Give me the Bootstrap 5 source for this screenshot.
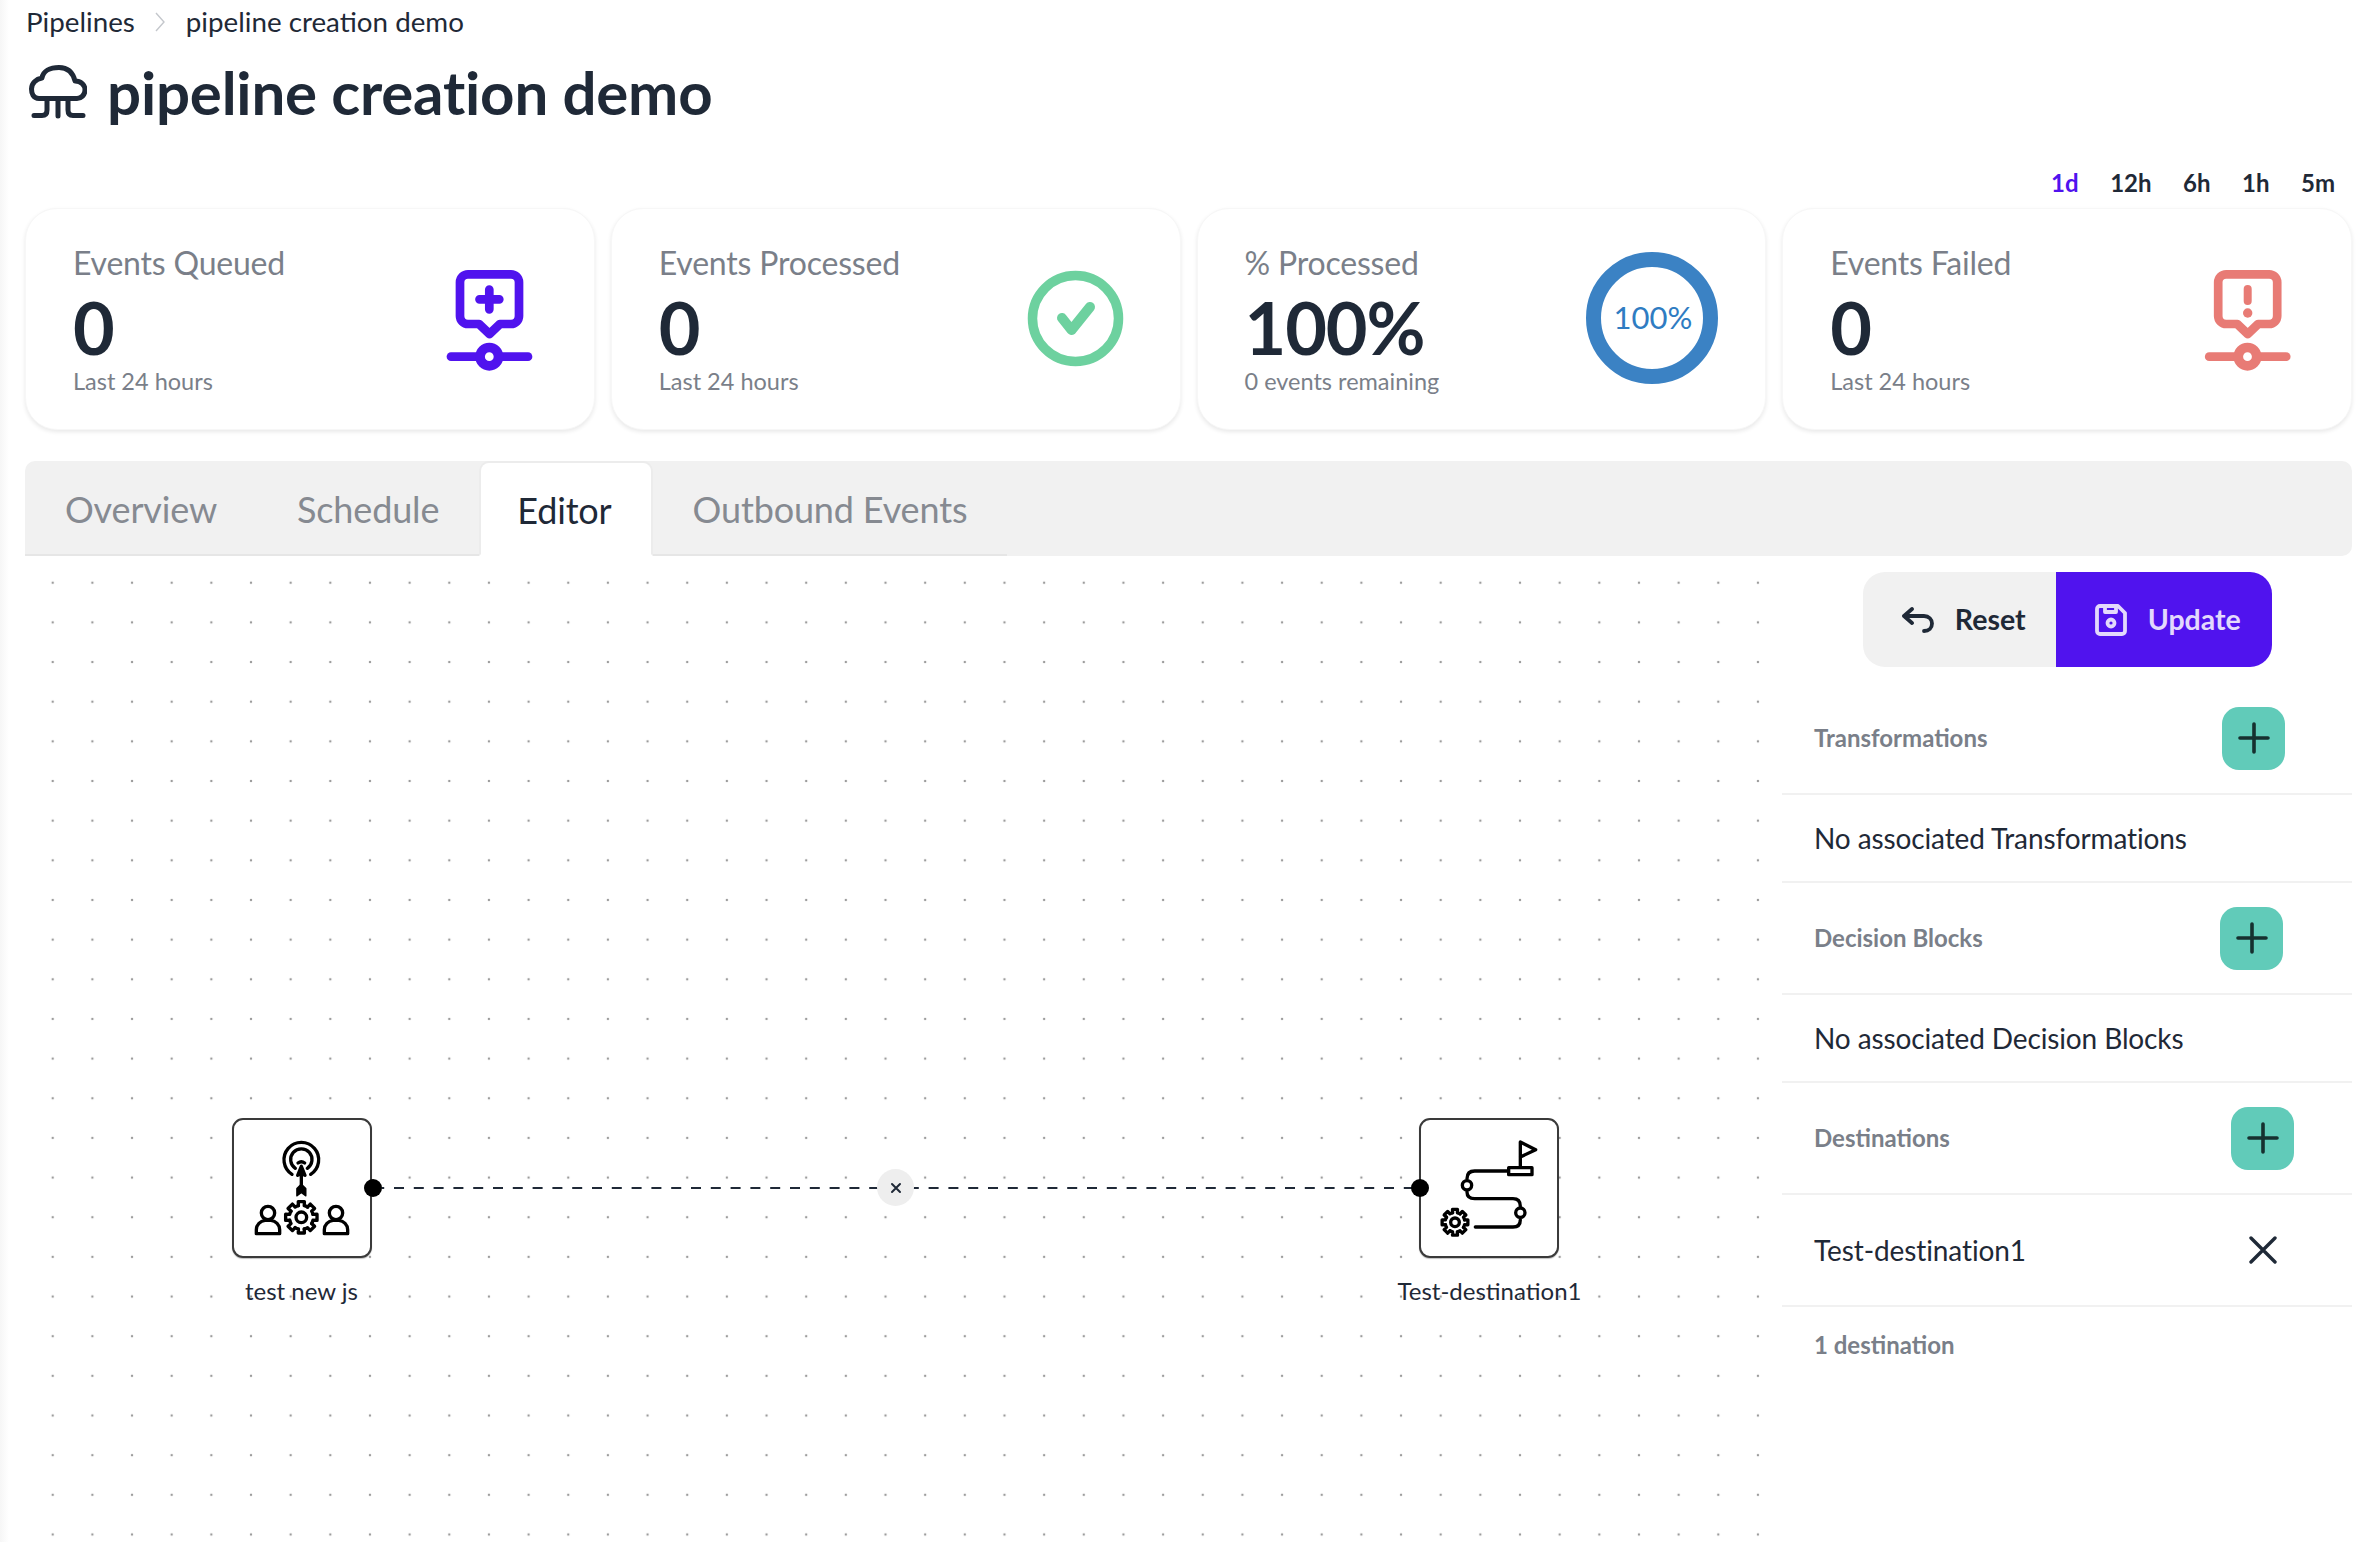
<!DOCTYPE html>
<html lang="en">
<head>
<meta charset="utf-8">
<title>pipeline creation demo</title>
<link href="https://cdn.jsdelivr.net/npm/bootstrap@5.3.0/dist/css/bootstrap.min.css" rel="stylesheet">
<style>
html,body{height:100%}
body{font-family:"Lato","Liberation Sans",sans-serif;color:#1f2937;background:linear-gradient(90deg,#f6f6f6,#fff 9px);overflow:hidden}
.page-shell{padding:0 20px 0 25px;height:1542px;display:flex;flex-direction:column}
.crumbs{height:44px;font-size:27.75px;gap:20.5px;padding-left:1px}
.crumbs a{color:#1f2937;text-decoration:none}
.title-row{height:102px;gap:20px;padding-left:2px;padding-bottom:6px}
.title-row h1{font-size:60px;font-weight:700;letter-spacing:-.2px;margin:0;line-height:1}
.range-row{height:62px;justify-content:flex-end;gap:31.5px;font-size:24px;font-weight:700;padding-right:17px;padding-top:12px}
.range-active{color:#5013ee}
.stat-row{gap:16px}
.stat-card{flex:1 1 0;height:222px;border-radius:32px;border:1px solid #f7f7f7;box-shadow:0 2px 4px rgba(0,0,0,.09);flex-direction:row;justify-content:space-between;padding:32px 35px 0 47px}
.stat-name{font-size:32px;letter-spacing:-.2px;line-height:44px;color:#7a7f89}
.stat-val{font-size:72px;font-weight:700;line-height:84px;letter-spacing:-.015em}
.stat-sub{font-size:23.5px;line-height:24px;color:#7a7f89}
.stat-ico{margin-top:9px;flex:none}
.tab-strip{margin-top:31px;background:#f1f1f1;border-radius:10px 10px 10px 0;border:0;height:95px;flex-wrap:nowrap}
.tab-strip .nav-link{font-size:36px;letter-spacing:-.15px;color:#868a91;padding:0 40px;height:95px;line-height:96px;border:0;border-bottom:2px solid #e6e6e6;border-radius:0;margin:0;background:transparent}
.tab-strip .nav-link.active{background:#fff;color:#1f2937;border:2px solid #ececec;border-bottom-color:#fff;border-radius:10px 10px 0 0;padding:0 39px 0 36px;margin-left:0;line-height:94px}
.work-row{flex:1;min-height:0}
.flow-canvas{flex:1;position:relative;background-image:radial-gradient(circle,#9c9c9c 1.2px,transparent 1.6px);background-size:39.67px 39.67px;background-position:7.9px 6.9px}
.flow-node{position:absolute;top:562px;width:140px;height:140px;border:2px solid #3a3a3a;border-radius:11px;background:#fff;box-shadow:0 1px 1px rgba(0,0,0,.25)}
.node-a{left:206.5px}
.node-b{left:1394px}
.flow-node svg{display:block;margin:-2px}
.flow-label{position:absolute;top:721px;font-size:24px;line-height:28px;transform:translateX(-50%);white-space:nowrap}
.label-a{left:276.500px}
.label-b{left:1464.500px}
.flow-handle{position:absolute;top:623px;width:18px;height:18px;border-radius:50%;background:#000}
.handle-a{left:339px}
.handle-b{left:1386px}
.flow-edge{position:absolute;left:357px;top:631px;width:1030px;height:2px;overflow:visible}
.flow-x{position:absolute;left:852px;top:613px;width:37px;height:37px;border-radius:50%;background:#eeeeee;display:flex;align-items:center;justify-content:center}
.side-panel{width:570px;flex:none;padding-top:16px}
.action-group{margin-left:81px;width:409px;margin-bottom:16px}
.action-group .btn{height:95px;font-size:28.5px;font-weight:700;display:flex;align-items:center;justify-content:center;border:0;--bs-btn-border-radius:22px;gap:21px;padding-left:18px;padding-right:10px}
.btn-reset{width:193px;background:#f1f1f1;color:#1f2937}
.btn-save{width:216px;background:#5013ee;color:#e3d9fc}
.side-row{border-bottom:2px solid #f1f1f1;padding-left:32px;display:flex;align-items:center;justify-content:space-between}
.row-head{height:112px;font-size:24px;font-weight:700;color:#7a7f89}
.row-item{height:88px;font-size:28px;letter-spacing:-.12px}
.row-tall{height:112px;font-size:28px;letter-spacing:-.1px}
.add-btn{width:63px;height:63px;padding:0;border:0;border-radius:17px;background:#61cbb9;display:flex;align-items:center;justify-content:center}
.add-t{margin-right:67px}
.add-d{margin-right:69px}
.add-e{margin-right:58px}
.del-x{margin-right:75px;display:flex}
.side-foot{padding:20px 0 0 32px;font-size:24px;font-weight:700;color:#7a7f89}
</style>
</head>
<body>
<svg width="0" height="0" class="position-absolute">
<defs>
<g id="gear-shape" fill="none" stroke="#000" stroke-linejoin="round">
<path id="gear-t" d="M34.9-8.7 47.1-9.2V9.2L34.9 8.7A36 36 0 0 1 30.9 18.5"/>
<use href="#gear-t" transform="rotate(45)"/><use href="#gear-t" transform="rotate(90)"/><use href="#gear-t" transform="rotate(135)"/>
<use href="#gear-t" transform="rotate(180)"/><use href="#gear-t" transform="rotate(225)"/><use href="#gear-t" transform="rotate(270)"/><use href="#gear-t" transform="rotate(315)"/>
</g>
<g id="plus-mark"><path d="M0-14V14M-14 0H14" stroke="#16302f" stroke-width="3.6" stroke-linecap="round" fill="none"/></g>
</defs>
</svg>
<div class="page-shell">
  <nav class="crumbs d-flex align-items-center" aria-label="breadcrumb">
    <a href="#">Pipelines</a>
    <svg width="10" height="20" viewBox="0 0 10 20"><path d="M1 1 9 10 1 19" fill="none" stroke="#c4c7cc" stroke-width="1.4"/></svg>
    <a href="#">pipeline creation demo</a>
  </nav>
  <div class="title-row d-flex align-items-center">
    <svg width="60" height="56" viewBox="26 36 60 56" fill="none" stroke="#1f2937" stroke-width="5" stroke-linecap="round" stroke-linejoin="round"><path d="M38 70.5C32 70.5 30.5 65 30.5 61 30.5 55.500 35 51 41 50 42 43 49 39.500 58 39.500 67 39.500 72 45 74 53 80 53 84 57 84 62 84 67 80 70.500 76 70.500Z"/><path d="M57 71V88M46 71V82Q46 87.500 41 87.500H33M67 71V82Q67 87.500 72 87.500H82"/></svg>
    <h1>pipeline creation demo</h1>
  </div>
  <div class="range-row d-flex align-items-center">
    <span class="range-active">1d</span><span>12h</span><span>6h</span><span>1h</span><span>5m</span>
  </div>
  <div class="stat-row d-flex">
    <div class="card stat-card">
      <div><div class="stat-name">Events Queued</div><div class="stat-val">0</div><div class="stat-sub">Last 24 hours</div></div>
      <svg class="stat-ico" width="140" height="130" viewBox="-1 0 140 130" fill="none" stroke="#5013ee" stroke-width="8.700" stroke-linecap="round" stroke-linejoin="round"><path d="M48 24.300H91A8 8 0 0 1 99 32.300V66A8 8 0 0 1 91 74H80L69.500 84 59 74H48A8 8 0 0 1 40 66V32.300A8 8 0 0 1 48 24.300Z"/><path d="M69.300 39.500V59.300M59.500 49.300H79.300"/><path d="M31 106.700H108"/><circle cx="69.300" cy="106.700" r="9.200" fill="#fff" stroke-width="9.600"/></svg>
    </div>
    <div class="card stat-card">
      <div><div class="stat-name">Events Processed</div><div class="stat-val">0</div><div class="stat-sub">Last 24 hours</div></div>
      <svg class="stat-ico" width="140" height="130" viewBox="-1 0 140 130" fill="none" stroke="#6dd19f"><circle cx="69.500" cy="68.500" r="43" stroke-width="9.500"/><path d="M56 68 65.500 80 84 57" stroke-width="10" stroke-linecap="round" stroke-linejoin="round"/></svg>
    </div>
    <div class="card stat-card">
      <div><div class="stat-name">% Processed</div><div class="stat-val">100%</div><div class="stat-sub">0 events remaining</div></div>
      <svg class="stat-ico overflow-visible" width="140" height="130" viewBox="0 0 140 130" fill="none"><circle cx="62" cy="68" r="58.500" stroke="#3b82c4" stroke-width="15"/><text x="63" y="79" text-anchor="middle" fill="#2f7cc2" stroke="none" font-size="31" font-family="Lato,sans-serif">100%</text></svg>
    </div>
    <div class="card stat-card">
      <div><div class="stat-name">Events Failed</div><div class="stat-val">0</div><div class="stat-sub">Last 24 hours</div></div>
      <svg class="stat-ico" width="140" height="130" viewBox="-2.200 0 140 130" fill="none" stroke="#e87b75" stroke-width="8.700" stroke-linecap="round" stroke-linejoin="round"><path d="M48 24.300H91A8 8 0 0 1 99 32.300V66A8 8 0 0 1 91 74H80L69.500 84 59 74H48A8 8 0 0 1 40 66V32.300A8 8 0 0 1 48 24.300Z"/><path d="M69.500 39V51" stroke-width="8"/><circle cx="69.500" cy="63" r="4.700" fill="#e87b75" stroke-width="0"/><path d="M31 106.700H108"/><circle cx="69.300" cy="106.700" r="9.200" fill="#fff" stroke-width="9.600"/></svg>
    </div>
  </div>
  <ul class="nav nav-tabs tab-strip">
    <li class="nav-item"><a class="nav-link" href="#">Overview</a></li>
    <li class="nav-item"><a class="nav-link" href="#">Schedule</a></li>
    <li class="nav-item"><a class="nav-link active" href="#">Editor</a></li>
    <li class="nav-item"><a class="nav-link" href="#">Outbound Events</a></li>
  </ul>
  <div class="work-row d-flex">
    <div class="flow-canvas">
      <svg class="flow-edge" viewBox="0 0 1030 2"><path d="M0 1H1030" stroke="#1f2937" stroke-width="2" stroke-dasharray="10 9.800" stroke-dashoffset="7.800"/></svg>
      <div class="flow-x"><svg width="12" height="12" viewBox="0 0 12 12"><path d="M2 2 10 10M10 2 2 10" stroke="#1f2937" stroke-width="2" stroke-linecap="round"/></svg></div>
      <div class="flow-node node-a">
        <svg width="140" height="140" viewBox="95 83 420 420" fill="none" stroke="#000" stroke-width="10" stroke-linecap="round" stroke-linejoin="round">
          <path d="M275 252A52 52 0 1 1 331 252"/><path d="M285 234A32 32 0 1 1 321 234"/><path d="M293 218A16 16 0 0 1 313 218"/>
          <path d="M303 228 292 255 303 250 314 255Z" fill="#000"/><path d="M303 250V285"/>
          <path d="M303 282 290 295V316L303 306 316 316V295Z" fill="#000" stroke-width="5"/>
          <circle cx="203" cy="368" r="20"/><path d="M168 430H238V418C238 403 226 392 212 390H194C180 392 168 403 168 418Z"/>
          <circle cx="407" cy="368" r="20"/><path d="M372 430H442V418C442 403 430 392 416 390H398C384 392 372 403 372 418Z"/>
          <use href="#gear-shape" transform="translate(303 381)" stroke-width="10"/><circle cx="303" cy="381" r="16"/>
        </svg>
      </div>
      <div class="flow-handle handle-a"></div>
      <div class="flow-label label-a">test new js</div>
      <div class="flow-node node-b">
        <svg width="140" height="140" viewBox="118 83 420 420" fill="none" stroke="#000" stroke-width="10" stroke-linecap="round" stroke-linejoin="round">
          <path d="M422 228V155L468 178 422 200"/><rect x="387" y="232" width="70" height="21"/>
          <path d="M385 242H285Q262 242 262 265"/><circle cx="262" cy="285" r="14"/>
          <path d="M262 305Q262 325 285 325H400Q422 325 422 348"/><circle cx="422" cy="367" r="14"/>
          <path d="M422 388Q422 410 400 410H287"/>
          <use href="#gear-shape" transform="translate(226 396) scale(.82)" stroke-width="12"/><circle cx="226" cy="396" r="13"/>
        </svg>
      </div>
      <div class="flow-handle handle-b"></div>
      <div class="flow-label label-b">Test-destination1</div>
    </div>
    <aside class="side-panel">
      <div class="btn-group action-group" role="group">
        <button type="button" class="btn btn-reset"><svg width="32" height="26" viewBox="0 0 32 26" fill="none" stroke="#1f2937" stroke-width="3.800" stroke-linecap="round" stroke-linejoin="round"><path d="M10 2 2 9 10 16M2 9H22C27 9 30 12.500 30 16.500 30 21 27 24 22 24"/></svg>Reset</button>
        <button type="button" class="btn btn-save"><svg width="32" height="32" viewBox="0 0 32 32" fill="none" stroke="#e3d9fc" stroke-width="3.800" stroke-linecap="round" stroke-linejoin="round"><path d="M5 2H23L30 9V27A3 3 0 0 1 27 30H5A3 3 0 0 1 2 27V5A3 3 0 0 1 5 2Z"/><path d="M10 2V8H21V2"/><circle cx="16" cy="19" r="3.500"/></svg>Update</button>
      </div>
      <div class="side-row row-head"><span>Transformations</span><button type="button" class="btn add-btn add-t" aria-label="Add"><svg width="32" height="32" viewBox="-16 -16 32 32"><use href="#plus-mark"/></svg></button></div>
      <div class="side-row row-item">No associated Transformations</div>
      <div class="side-row row-head"><span>Decision Blocks</span><button type="button" class="btn add-btn add-d" aria-label="Add"><svg width="32" height="32" viewBox="-16 -16 32 32"><use href="#plus-mark"/></svg></button></div>
      <div class="side-row row-item">No associated Decision Blocks</div>
      <div class="side-row row-head"><span>Destinations</span><button type="button" class="btn add-btn add-e" aria-label="Add"><svg width="32" height="32" viewBox="-16 -16 32 32"><use href="#plus-mark"/></svg></button></div>
      <div class="side-row row-tall"><span>Test-destination1</span><span class="del-x"><svg width="28" height="28" viewBox="0 0 28 28"><path d="M2 2 26 26M26 2 2 26" stroke="#1f2937" stroke-width="3.400" stroke-linecap="round"/></svg></span></div>
      <div class="side-foot">1 destination</div>
    </aside>
  </div>
</div>
<script src="https://cdn.jsdelivr.net/npm/bootstrap@5.3.0/dist/js/bootstrap.bundle.min.js"></script>
</body>
</html>
